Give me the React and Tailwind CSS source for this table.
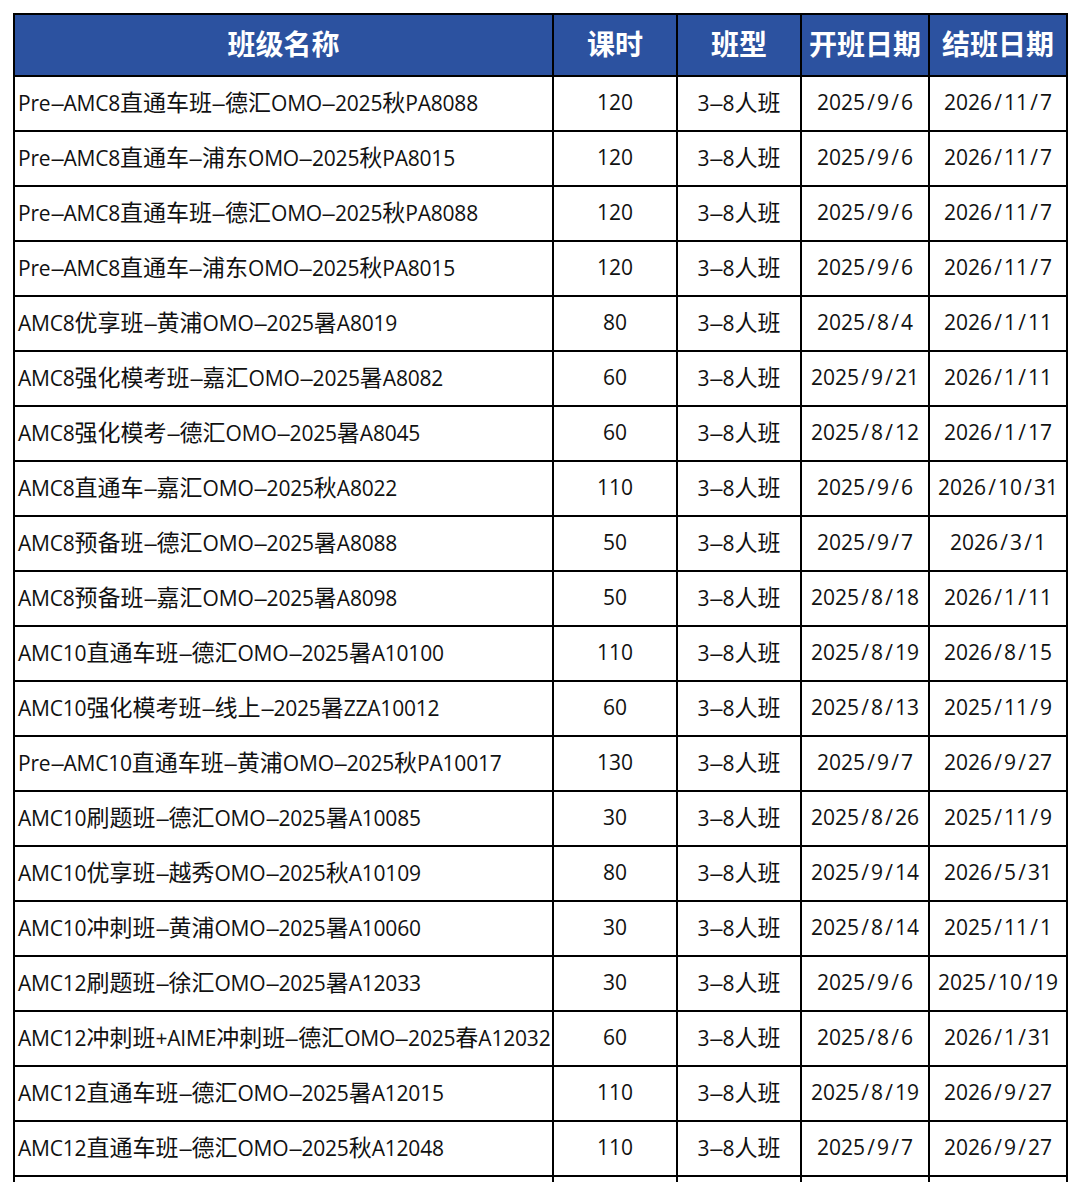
const rows = [
  ['Pre-AMC8直通车班-德汇OMO-2025秋PA8088', '120', '2025/9/6', '2026/11/7'],
  ['Pre-AMC8直通车-浦东OMO-2025秋PA8015', '120', '2025/9/6', '2026/11/7'],
  ['Pre-AMC8直通车班-德汇OMO-2025秋PA8088', '120', '2025/9/6', '2026/11/7'],
  ['Pre-AMC8直通车-浦东OMO-2025秋PA8015', '120', '2025/9/6', '2026/11/7'],
  ['AMC8优享班-黄浦OMO-2025暑A8019', '80', '2025/8/4', '2026/1/11'],
  ['AMC8强化模考班-嘉汇OMO-2025暑A8082', '60', '2025/9/21', '2026/1/11'],
  ['AMC8强化模考-德汇OMO-2025暑A8045', '60', '2025/8/12', '2026/1/17'],
  ['AMC8直通车-嘉汇OMO-2025秋A8022', '110', '2025/9/6', '2026/10/31'],
  ['AMC8预备班-德汇OMO-2025暑A8088', '50', '2025/9/7', '2026/3/1'],
  ['AMC8预备班-嘉汇OMO-2025暑A8098', '50', '2025/8/18', '2026/1/11'],
  ['AMC10直通车班-德汇OMO-2025暑A10100', '110', '2025/8/19', '2026/8/15'],
  ['AMC10强化模考班-线上-2025暑ZZA10012', '60', '2025/8/13', '2025/11/9'],
  ['Pre-AMC10直通车班-黄浦OMO-2025秋PA10017', '130', '2025/9/7', '2026/9/27'],
  ['AMC10刷题班-德汇OMO-2025暑A10085', '30', '2025/8/26', '2025/11/9'],
  ['AMC10优享班-越秀OMO-2025秋A10109', '80', '2025/9/14', '2026/5/31'],
  ['AMC10冲刺班-黄浦OMO-2025暑A10060', '30', '2025/8/14', '2025/11/1'],
  ['AMC12刷题班-徐汇OMO-2025暑A12033', '30', '2025/9/6', '2025/10/19'],
  ['AMC12冲刺班+AIME冲刺班-德汇OMO-2025春A12032', '60', '2025/8/6', '2026/1/31'],
  ['AMC12直通车班-德汇OMO-2025暑A12015', '110', '2025/8/19', '2026/9/27'],
  ['AMC12直通车班-德汇OMO-2025秋A12048', '110', '2025/9/7', '2026/9/27'],
];

// source font: CJK glyphs run larger than the latin ones, and "-" "/" are wide
const Wide = ({ text }) =>
  text.split(/([-/]|[\u4e00-\u9fff]+)/).map((part, i) => {
    if (!part) return null;
    if (part === '-') {
      return (
        <span key={i} className="inline-block w-[13px] text-center">
          <span className="inline-block scale-x-[2.4]">-</span>
        </span>
      );
    }
    if (part === '/') {
      return (
        <span key={i} className="inline-block w-[12px] text-center">/</span>
      );
    }
    if (/[\u4e00-\u9fff]/.test(part)) {
      return (
        <span key={i} className="text-[23px] tracking-normal">{part}</span>
      );
    }
    return part;
  });

const cell = 'border-2 border-black pb-[2px] text-center';

const App = () => {
  return (
    <div className="bg-white w-[1080px] h-[1182px] overflow-hidden pl-[13px] pt-[13px] font-['Open_Sans','Noto_Sans_CJK_SC',sans-serif] text-[#111]">
      <table className="table-fixed border-collapse border-2 border-black w-[1053px]">
        <colgroup>
          <col className="w-[539px]" />
          <col className="w-[124px]" />
          <col className="w-[124px]" />
          <col className="w-[128px]" />
          <col className="w-[138px]" />
        </colgroup>
        <thead>
          <tr className="bg-[#2c52a0] text-white text-[28px] font-bold h-[62px] leading-none">
            <th className="border-2 border-black p-0 pb-[3px] text-center">班级名称</th>
            <th className="border-2 border-black p-0 pb-[3px] text-center">课时</th>
            <th className="border-2 border-black p-0 pb-[3px] text-center">班型</th>
            <th className="border-2 border-black p-0 pb-[3px] text-center whitespace-nowrap">开班日期</th>
            <th className="border-2 border-black p-0 pb-[3px] text-center whitespace-nowrap">结班日期</th>
          </tr>
        </thead>
        <tbody className="text-[21px] leading-none">
          {rows.map((r, i) => (
            <tr key={i} className="h-[55px]">
              <td className="border-2 border-black pl-[3px] pr-0 pb-[2px] whitespace-nowrap overflow-hidden tracking-[-0.2px]">
                <Wide text={r[0]} />
              </td>
              <td className={cell}>{r[1]}</td>
              <td className={cell}>
                <Wide text="3-8人班" />
              </td>
              <td className={cell}>
                <Wide text={r[2]} />
              </td>
              <td className={cell}>
                <Wide text={r[3]} />
              </td>
            </tr>
          ))}
          <tr className="h-[55px]">
            <td className="border-2 border-black"></td>
            <td className="border-2 border-black"></td>
            <td className="border-2 border-black"></td>
            <td className="border-2 border-black"></td>
            <td className="border-2 border-black"></td>
          </tr>
        </tbody>
      </table>
    </div>
  );
};

export default App;
